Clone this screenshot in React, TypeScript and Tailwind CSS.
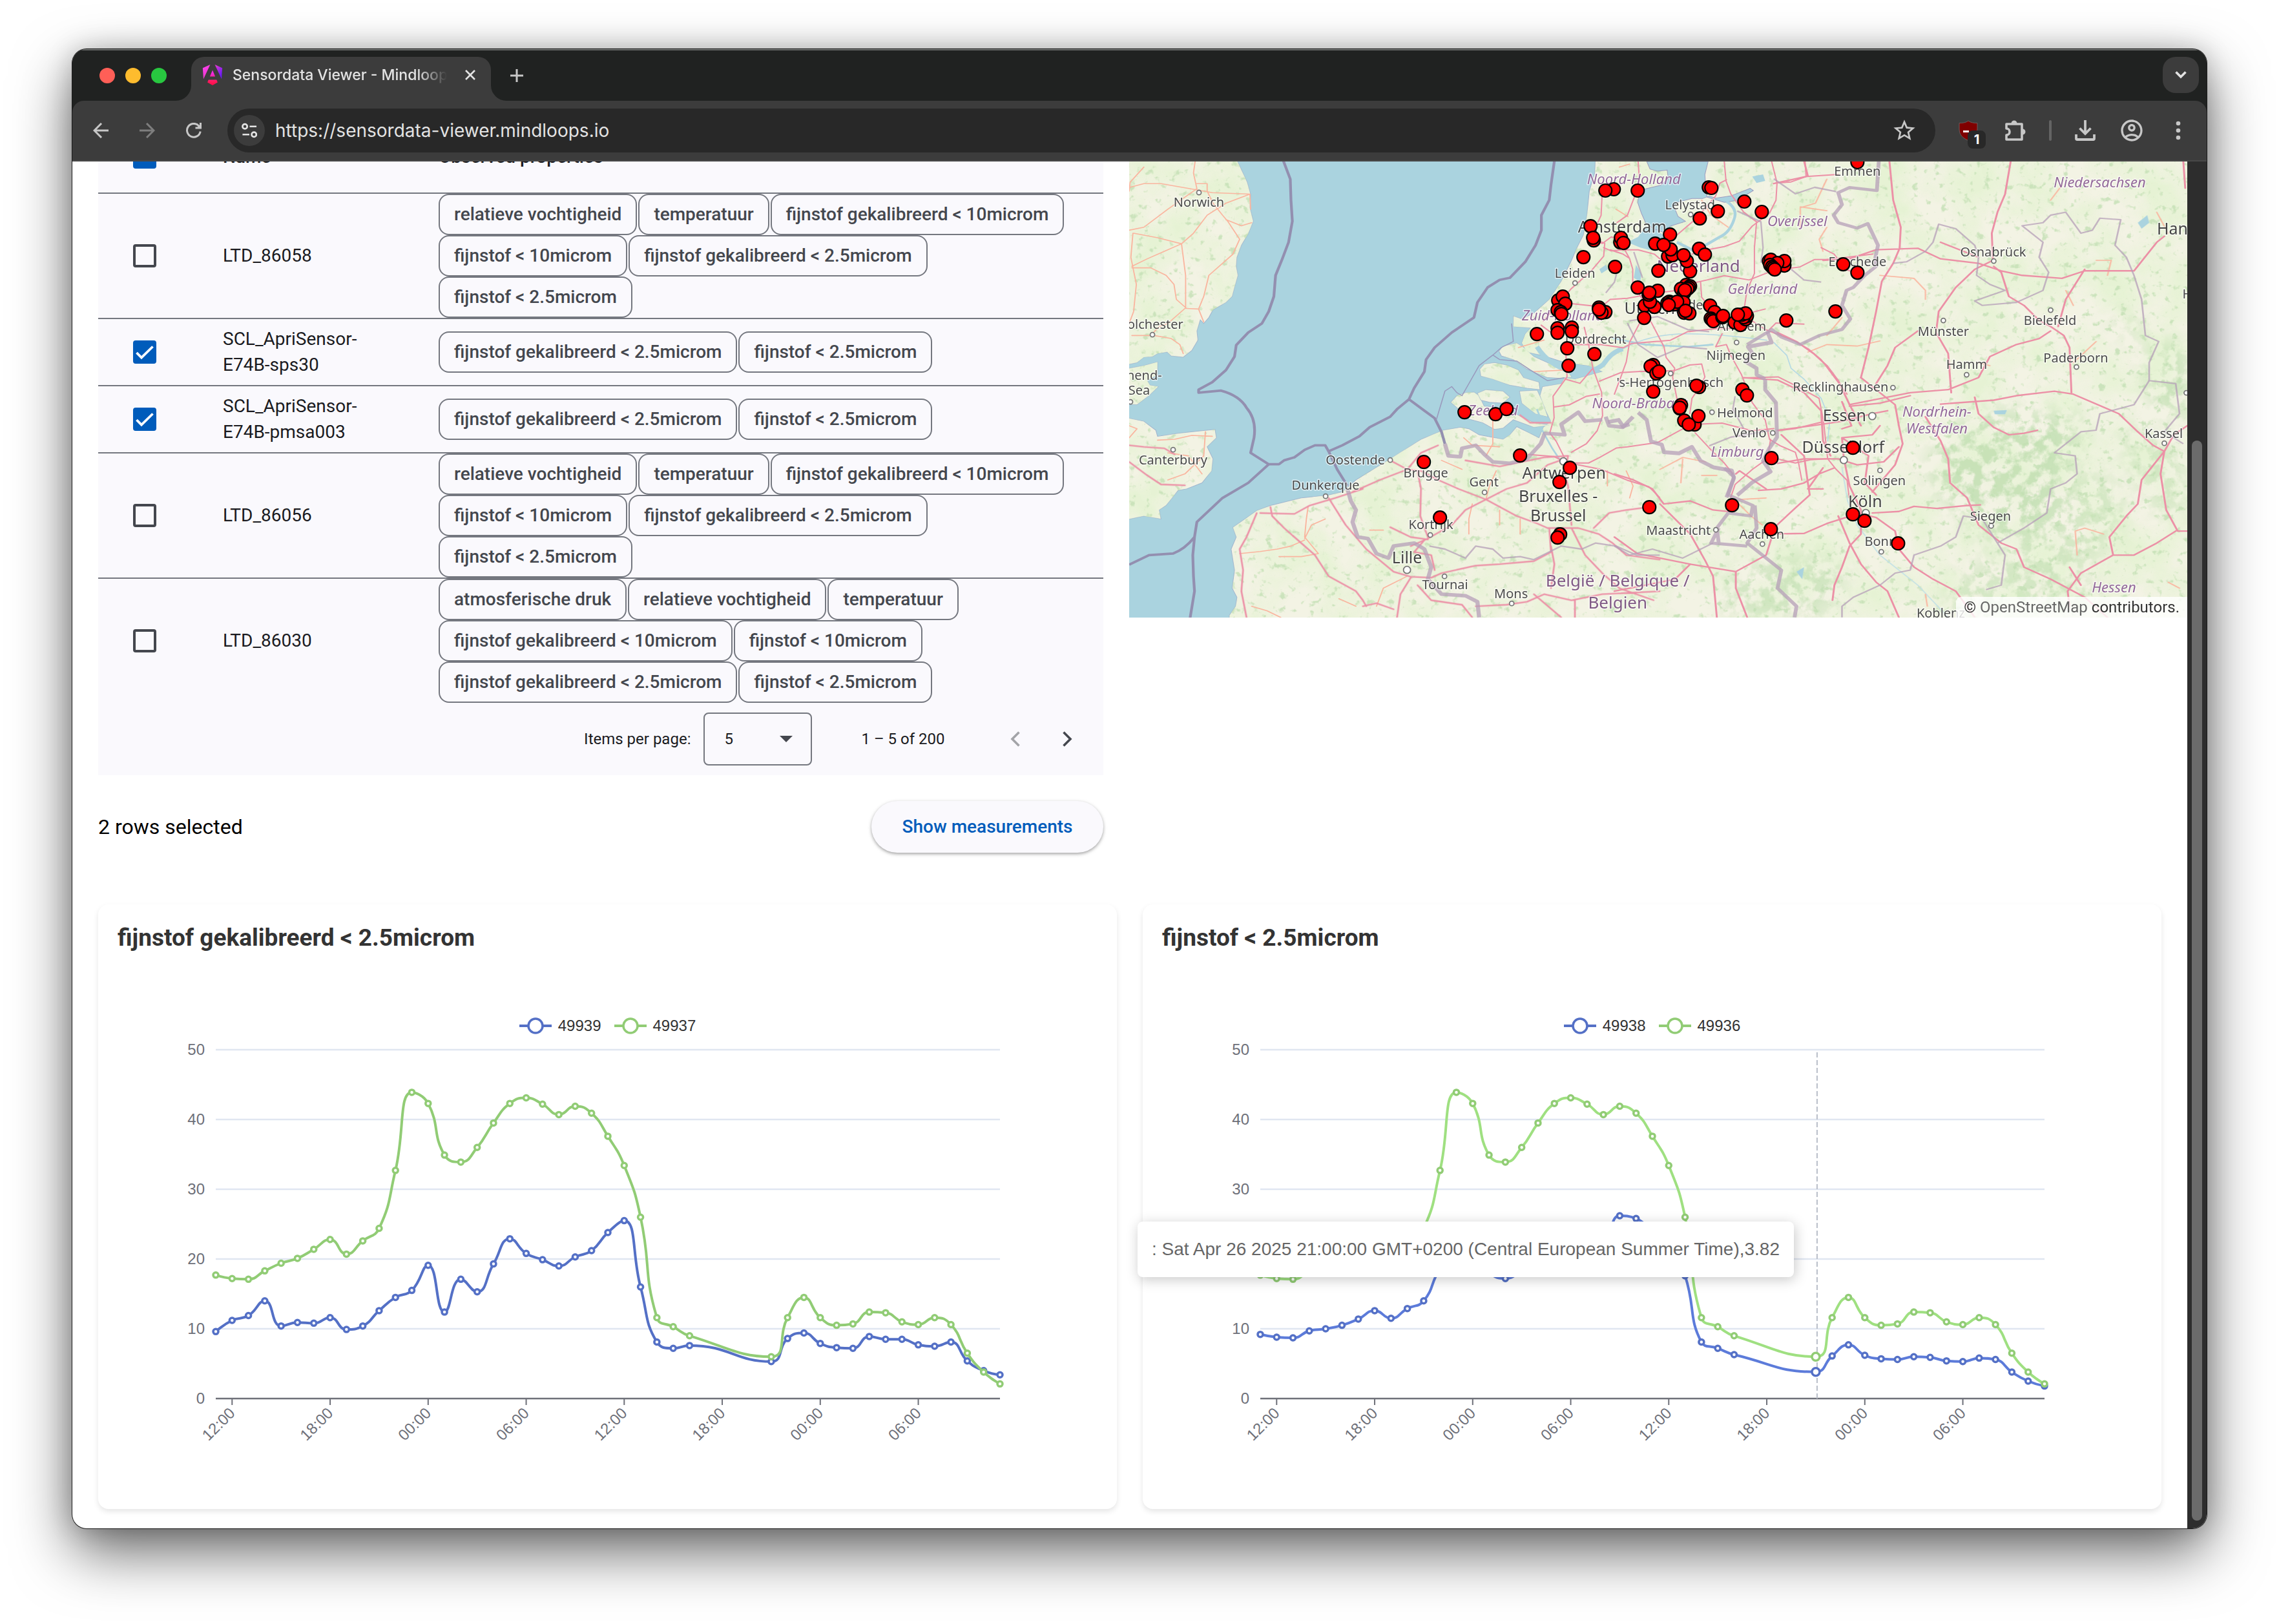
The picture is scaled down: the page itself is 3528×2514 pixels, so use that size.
import React, { useId, useState } from "react";
import { MdOutlineAccountCircle, MdStarBorder } from "react-icons/md";

/* ------------------------------------------------------------------ */
/* Browser chrome                                                      */
/* ------------------------------------------------------------------ */

function AngularLogo() {
  return (
    <svg viewBox="0 0 24 24" className="size-8 shrink-0" aria-hidden="true">
      <defs>
        <linearGradient id="ng-a" x1="0" y1="0" x2="1" y2="0.6">
          <stop offset="0" stopColor="#ff41f8" />
          <stop offset="0.45" stopColor="#f03ad0" />
          <stop offset="1" stopColor="#6e1bf4" />
        </linearGradient>
        <linearGradient id="ng-b" x1="0" y1="0" x2="0" y2="1">
          <stop offset="0.2" stopColor="#f02be0" />
          <stop offset="0.75" stopColor="#ff1a5c" />
          <stop offset="1" stopColor="#ff0a45" />
        </linearGradient>
      </defs>
      <path
        fill="url(#ng-a)"
        d="M14.692 0l7.832 16.855.814-12.856L14.692 0ZM9.308 0 .662 3.999l.814 12.856L9.308 0Z"
      />
      <path
        fill="url(#ng-b)"
        d="M16.712 17.711H7.288l-1.204 2.916L12 24l5.916-3.373-1.204-2.916ZM8.903 13.93h6.198L12 6.396 8.903 13.93Z"
      />
    </svg>
  );
}

function TabFlare({ side }: { side: "left" | "right" }) {
  return (
    <svg
      viewBox="0 0 24 24"
      className={side === "left" ? "absolute bottom-0 -left-6 size-6" : "absolute bottom-0 -right-6 size-6"}
      aria-hidden="true"
    >
      <path d={side === "left" ? "M24 0 V24 H0 A24 24 0 0 0 24 0Z" : "M0 0 V24 H24 A24 24 0 0 1 0 0Z"} fill="#3c3c3c" />
    </svg>
  );
}

function TabStrip() {
  return (
    <div className="flex h-20 items-stretch border-t-2 border-[#6d6f6e] bg-[#202221] pl-[42px] pr-3">
      <div className="flex items-center gap-4" aria-hidden="true">
        <span className="size-6 rounded-full bg-[#ff5f57]" />
        <span className="size-6 rounded-full bg-[#febc2e]" />
        <span className="size-6 rounded-full bg-[#28c840]" />
      </div>
      <div className="relative ml-[38px] mt-2.5 flex w-[464px] items-start rounded-t-[20px] bg-[#3c3c3c] pl-[17px] pr-5">
        <TabFlare side="left" />
        <TabFlare side="right" />
        <div className="flex h-14 w-full items-center">
          <AngularLogo />
          <div className="ml-[15px] h-8 flex-1 overflow-hidden whitespace-nowrap text-[23px] font-medium leading-8 text-[#e3e3e3] [mask-image:linear-gradient(to_right,black_86%,transparent)]">
            Sensordata Viewer - Mindloops
          </div>
          <button type="button" aria-label="Close tab" className="ml-6 p-1">
            <svg viewBox="0 0 16 16" className="size-4" fill="none" stroke="#e3e3e3" strokeWidth="2.6">
              <path d="M1 1 15 15M15 1 1 15" />
            </svg>
          </button>
        </div>
      </div>
      <button type="button" aria-label="New tab" className="ml-[30px] self-center">
        <svg viewBox="0 0 20 20" className="size-5" fill="none" stroke="#c7c7c7" strokeWidth="3">
          <path d="M10 0V20M0 10H20" />
        </svg>
      </button>
      <button
        type="button"
        aria-label="Search tabs"
        className="ml-auto mt-2.5 flex size-14 items-center justify-center rounded-[20px] bg-[#3c3c3c]"
      >
        <svg viewBox="0 0 18 12" className="h-3 w-[18px]" fill="none" stroke="#e3e3e3" strokeWidth="3.6">
          <path d="M1.5 1.5 9 9 16.5 1.5" />
        </svg>
      </button>
    </div>
  );
}

function Toolbar() {
  return (
    <div className="flex h-[94px] items-center rounded-t-[18px] border-b-2 border-[#484848] bg-[#3c3c3c] pl-8 pr-10">
      <div className="flex items-center gap-12">
        <button type="button" aria-label="Back">
          <svg viewBox="0 0 24 24" className="size-6" fill="none" stroke="#c7c7c7" strokeWidth="3">
            <path d="M24 12H2.5M13 1 2 12 13 23" />
          </svg>
        </button>
        <button type="button" aria-label="Forward">
          <svg viewBox="0 0 24 24" className="size-6" fill="none" stroke="#7e7e7e" strokeWidth="3">
            <path d="M0 12H21.5M11 1 22 12 11 23" />
          </svg>
        </button>
        <button type="button" aria-label="Reload">
          <svg viewBox="0 0 24 24" className="size-6" fill="none" stroke="#c7c7c7" strokeWidth="3">
            <path d="M22.2 13.5A10.4 10.4 0 1 1 20 5.2L22 8" />
            <path d="M14.5 8H22.5V0" />
            <path d="M16 8.5H23V1.500Z" fill="#c7c7c7" stroke="none" />
          </svg>
        </button>
      </div>
      <div className="ml-10 flex h-[68px] flex-1 items-center rounded-full bg-[#282828] pl-2.5 pr-7">
        <button
          type="button"
          aria-label="View site information"
          className="flex size-12 shrink-0 items-center justify-center rounded-full bg-[#3c3c3c]"
        >
          <svg viewBox="0 0 25 25" className="size-6" fill="none" stroke="#e3e3e3" strokeWidth="2.8">
            <circle cx="5.300" cy="6" r="3.800" />
            <path d="M13 6H24M1.500 19H12.500" />
            <circle cx="20" cy="19" r="3.800" />
          </svg>
        </button>
        <input
          type="text"
          aria-label="Address"
          defaultValue="https://sensordata-viewer.mindloops.io"
          className="ml-4 h-10 min-w-0 flex-1 bg-transparent text-[28px] leading-10 text-[#e3e3e3] outline-none"
        />
        <button type="button" aria-label="Bookmark this tab">
          <MdStarBorder className="size-10 text-[#c7c7c7]" />
        </button>
      </div>
      <button type="button" aria-label="uBlock Origin" className="relative ml-9">
        <svg viewBox="0 0 30 32" className="h-8 w-[30px]" aria-hidden="true">
          <path
            d="M15 1C11.500 4 6 4.500 1 4.500V14C1 22.500 6.500 28 15 31.500 23.500 28 29 22.500 29 14V4.500C24 4.500 18.500 4 15 1Z"
            fill="#800000"
            stroke="#6b5b5b"
            strokeWidth="1"
          />
          <path d="M7 17.500H16" stroke="#fff" strokeWidth="3" />
        </svg>
        <span className="absolute -bottom-3 left-3.5 flex size-7 items-center justify-center rounded-lg bg-[#282828] text-[20px] font-bold leading-7 text-white">
          1
        </span>
      </button>
      <button type="button" aria-label="Extensions" className="ml-[38px]">
        <svg viewBox="0 0 38 38" className="size-[38px]" aria-hidden="true">
          <path
            d="M6 9H30V33H6V26C9 26 11 23.800 11 21 11 18.200 9 16 6 16Z"
            fill="none"
            stroke="#c7c7c7"
            strokeWidth="3.600"
            strokeLinejoin="round"
          />
          <path d="M13.500 8A4.500 4.500 0 0 1 22.500 8ZM31 16.500A4.500 4.500 0 0 1 31 25.500Z" fill="#c7c7c7" />
        </svg>
      </button>
      <span className="ml-[34px] h-8 w-1 rounded-full bg-[#646464]" />
      <button type="button" aria-label="Downloads" className="ml-9">
        <svg viewBox="0 0 32 32" className="size-8" fill="none" stroke="#c7c7c7" strokeWidth="3.800">
          <path d="M16 0V20M7.500 12.500 16 21 24.500 12.500" />
          <path d="M2 22V28.500Q2 30 3.500 30H28.500Q30 30 30 28.500V22" />
        </svg>
      </button>
      <button type="button" aria-label="Profile" className="ml-9">
        <MdOutlineAccountCircle className="size-10 text-[#c7c7c7]" />
      </button>
      <button type="button" aria-label="Menu" className="ml-12">
        <svg viewBox="0 0 8 32" className="h-8 w-2" fill="#c7c7c7">
          <circle cx="4" cy="5" r="3.300" />
          <circle cx="4" cy="16" r="3.300" />
          <circle cx="4" cy="27" r="3.300" />
        </svg>
      </button>
    </div>
  );
}

/* ------------------------------------------------------------------ */
/* Sensor table                                                        */
/* ------------------------------------------------------------------ */

type Sensor = { name: string; properties: string[]; selected: boolean };

const CAL25 = "fijnstof gekalibreerd < 2.5microm";
const CAL10 = "fijnstof gekalibreerd < 10microm";
const RAW25 = "fijnstof < 2.5microm";
const RAW10 = "fijnstof < 10microm";

const SENSORS: Sensor[] = [
  { name: "LTD_86058", properties: ["relatieve vochtigheid", "temperatuur", CAL10, RAW10, CAL25, RAW25], selected: false },
  { name: "SCL_ApriSensor-E74B-sps30", properties: [CAL25, RAW25], selected: true },
  { name: "SCL_ApriSensor-E74B-pmsa003", properties: [CAL25, RAW25], selected: true },
  { name: "LTD_86056", properties: ["relatieve vochtigheid", "temperatuur", CAL10, RAW10, CAL25, RAW25], selected: false },
  {
    name: "LTD_86030",
    properties: ["atmosferische druk", "relatieve vochtigheid", "temperatuur", CAL10, RAW10, CAL25, RAW25],
    selected: false,
  },
];

function CheckBox({
  label,
  checked,
  partial = false,
  onChange,
}: {
  label: string;
  checked: boolean;
  partial?: boolean;
  onChange: () => void;
}) {
  return (
    <label className="relative block size-9">
      <input
        type="checkbox"
        aria-label={label}
        checked={checked}
        onChange={onChange}
        className="block size-9 appearance-none rounded border-4 border-[#44474e] checked:border-[#005cbb] checked:bg-[#005cbb]"
      />
      {checked && (
        <svg viewBox="0 0 36 36" className="pointer-events-none absolute inset-0 size-9" fill="none" stroke="#fff" strokeWidth="3.800">
          <path d={partial ? "M7 18H29" : "M5.500 19 13 26.500 30.500 9.500"} />
        </svg>
      )}
    </label>
  );
}

function SensorTable() {
  const [rows, setRows] = useState(SENSORS);
  const toggle = (index: number) =>
    setRows((all) => all.map((row, i) => (i === index ? { ...row, selected: !row.selected } : row)));
  const selected = rows.filter((row) => row.selected).length;
  const toggleAll = () => setRows((all) => all.map((row) => ({ ...row, selected: selected === 0 })));

  return (
    <section className="-mt-[62px]">
      <div className="bg-[#faf9fd]">
        <table className="w-full table-fixed border-separate border-spacing-0 text-[28px] leading-10 text-[#1a1b1f]">
          <colgroup>
            <col className="w-[161px]" />
            <col className="w-[366px]" />
            <col />
          </colgroup>
          <thead>
            <tr className="h-28 text-left">
              <th className="border-b-2 border-[#74777f] pl-[54px]">
                <CheckBox
                  label="Select all"
                  checked={selected > 0}
                  partial={selected < rows.length}
                  onChange={toggleAll}
                />
              </th>
              <th className="border-b-2 border-[#74777f] pl-8 font-medium">Name</th>
              <th className="border-b-2 border-[#74777f] font-medium">Observed properties</th>
            </tr>
          </thead>
          <tbody>
            {rows.map((row, i) => {
              const line = i < rows.length - 1 ? "border-b-2 border-[#74777f] " : "";
              return (
                <tr key={row.name} className="h-[104px]">
                  <td className={line + "pl-[54px]"}>
                    <CheckBox label={"Select " + row.name} checked={row.selected} onChange={() => toggle(i)} />
                  </td>
                  <td className={line + "pl-8 pr-16"}>{row.name}</td>
                  <td className={line + "pr-8"}>
                    <ul className="flex flex-wrap gap-x-0.5">
                      {row.properties.map((property) => (
                        <li
                          key={property}
                          className="flex h-16 items-center whitespace-nowrap rounded-2xl border-2 border-[#74777f] px-[22px] font-medium text-[#44474e]"
                        >
                          {property}
                        </li>
                      ))}
                    </ul>
                  </td>
                </tr>
              );
            })}
          </tbody>
        </table>
        <div className="flex h-28 items-center justify-end pr-12 text-[24px] leading-8 text-[#1a1b1f]">
          <label htmlFor="page-size">Items per page:</label>
          <div className="relative ml-5">
            <select
              id="page-size"
              defaultValue="5"
              className="block h-[82px] w-[168px] appearance-none rounded-lg border-2 border-[#74777f] bg-transparent pl-[30px] text-[24px] leading-8"
            >
              <option>5</option>
              <option>10</option>
              <option>20</option>
            </select>
            <svg viewBox="0 0 20 10" className="pointer-events-none absolute right-[30px] top-9 h-2.5 w-5" fill="#44474e">
              <path d="M0 0H20L10 10Z" />
            </svg>
          </div>
          <span className="ml-[76px]">1 – 5 of 200</span>
          <button type="button" aria-label="Previous page" disabled className="ml-[102px]">
            <svg viewBox="0 0 16 24" className="h-6 w-4" fill="none" stroke="#a3a4a8" strokeWidth="3.600">
              <path d="M13.500 1.500 3 12 13.500 22.500" />
            </svg>
          </button>
          <button type="button" aria-label="Next page" className="ml-16">
            <svg viewBox="0 0 16 24" className="h-6 w-4" fill="none" stroke="#44474e" strokeWidth="3.600">
              <path d="M2.500 1.500 13 12 2.500 22.500" />
            </svg>
          </button>
        </div>
      </div>
      <div className="mt-10 flex items-center justify-between">
        <p className="text-[32px] leading-10 text-black">{selected} rows selected</p>
        <button
          type="button"
          className="h-20 rounded-full bg-[#faf9fd] px-12 text-[28px] font-medium leading-10 text-[#005cbb] shadow-[0_2px_4px_rgba(0,0,0,0.3),0_2px_6px_2px_rgba(0,0,0,0.06)]"
        >
          Show measurements
        </button>
      </div>
    </section>
  );
}

/* ------------------------------------------------------------------ */
/* Map                                                                 */
/* ------------------------------------------------------------------ */

const MARKERS: [number, number][] = [
  [750, 43], [737, 45], [787, 45], [897, 40], [901, 41], [952, 62], [979, 78], [911, 77], [883, 88], [1127, 1],
  [714, 100], [719, 122], [718, 118], [760, 125], [761, 118], [765, 126], [703, 148], [752, 163], [837, 113],
  [834, 147], [841, 145], [838, 136], [814, 127], [827, 129], [882, 135], [891, 144], [868, 170], [863, 154],
  [858, 145], [819, 169], [990, 154], [993, 152], [1014, 161], [1014, 154], [1003, 157], [992, 160], [995, 163],
  [997, 165], [999, 167], [1105, 159], [1127, 172], [1093, 232], [1017, 246], [787, 195], [818, 200], [798, 223],
  [813, 225], [806, 217], [804, 206], [805, 203], [797, 242], [862, 191], [868, 193], [866, 195], [854, 197],
  [864, 197], [859, 203], [860, 199], [833, 219], [836, 217], [838, 219], [844, 221], [858, 218], [848, 217],
  [835, 222], [859, 234], [867, 235], [861, 231], [899, 223], [906, 233], [900, 243], [902, 245], [904, 247],
  [918, 241], [919, 239], [937, 249], [946, 253], [954, 244], [956, 239], [951, 241], [948, 237], [954, 235],
  [942, 237], [664, 215], [671, 209], [675, 220], [663, 230], [668, 233], [669, 236], [737, 233], [731, 234],
  [727, 226], [727, 229], [663, 258], [685, 257], [663, 265], [685, 263], [631, 267], [678, 289], [720, 298],
  [680, 316], [811, 315], [807, 317], [816, 328], [820, 325], [811, 356], [882, 349], [878, 347], [854, 377],
  [852, 382], [852, 381], [949, 353], [956, 362], [859, 401], [875, 407], [881, 394], [866, 407], [994, 459],
  [1120, 443], [682, 474], [666, 496], [519, 388], [567, 391], [584, 383], [605, 455], [456, 465], [481, 551],
  [805, 535], [667, 577], [663, 582], [933, 532], [993, 569], [1120, 546], [1138, 556], [1190, 591],
];

const TOWNS: [string, number, number][] = [
  ["Norwich", 108, 70], ["Colchester", 34, 259], ["Southend-", 2, 338], ["on-Sea", 0, 361], ["Canterbury", 68, 469],
  ["Oostende", 350, 469], ["Brugge", 459, 489], ["Dunkerque", 304, 508], ["Gent", 549, 503], ["Kortrijk", 467, 569],
  ["Tournai", 489, 662], ["Mons", 591, 676], ["Leiden", 690, 180], ["Lelystad", 868, 74], ["Ede", 871, 229],
  ["Emmen", 1127, 22], ["Osnabrück", 1337, 147], ["Enschede", 1127, 162], ["Arnhem", 948, 262], ["Nijmegen", 939, 307],
  ["Dordrecht", 722, 282], ["Münster", 1260, 270], ["Bielefeld", 1425, 253], ["Hamm", 1296, 321],
  ["Paderborn", 1465, 311], ["'s-Hertogenbosch", 837, 349], ["Recklinghausen", 1101, 356], ["Helmond", 953, 396],
  ["Venlo", 960, 427], ["Solingen", 1161, 501], ["Siegen", 1333, 556], ["Kassel", 1601, 428], ["Maastricht", 850, 578],
  ["Aachen", 979, 584], ["Bonn", 1163, 595], ["Koblenz", 1256, 706], ["Höxter", 1662, 212],
];

const CITIES: [string, number, number][] = [
  ["Amsterdam", 763, 110], ["Utrecht", 810, 236], ["Antwerpen", 673, 491], ["Bruxelles -", 664, 527],
  ["Brussel", 664, 557], ["Lille", 430, 622], ["Hannover", 1648, 113], ["Essen", 1107, 402], ["Düsseldorf", 1105, 451],
  ["Köln", 1139, 535],
];

const REGIONS: [string, number, number][] = [
  ["Noord-Holland", 781, 35], ["Overijssel", 1034, 100], ["Gelderland", 980, 205], ["Zuid-Holland", 671, 246],
  ["Niedersachsen", 1502, 40], ["Noord-Brabant", 790, 382], ["Nordrhein-", 1250, 395], ["Westfalen", 1250, 421],
  ["Limburg", 941, 457], ["Hessen", 1524, 667], ["Zeeland", 563, 393],
];

const COUNTRIES: [string, number, number][] = [
  ["Nederland", 881, 171], ["België / Belgique /", 756, 658], ["Belgien", 756, 692],
];

const TOWN_DOTS: [number, number][] = [
  [108, 48], [36, 268], [2, 372], [68, 446], [404, 462], [304, 518], [550, 512], [466, 578], [488, 642], [592, 684],
  [690, 188], [869, 82], [1338, 154], [1260, 246], [1426, 230], [1296, 330], [1466, 318], [838, 328], [1182, 350],
  [902, 388], [996, 420], [1162, 478], [1334, 564], [1602, 436], [908, 570], [980, 592], [1164, 604], [940, 280],
  [1636, 358],
];

const CITY_DOTS: [number, number][] = [[672, 464], [430, 632], [1150, 394], [1106, 462], [1140, 544], [664, 572]];

const WEST = "translate(-9 -10) scale(0.5294 0.4655)";
const EAST = "translate(751 -10) scale(0.5869 0.4655)";
const CENTRE = "translate(631 0) scale(0.3333)";

const LAND = [
  "M0 0H325Q350 60 362 90L372 130 370 175 380 220 365 262 345 300 332 340 330 370 335 400 325 440 318 470 300 490 262 515 250 540 235 560 225 548 215 585 218 615 200 650 175 672 140 668 128 655 100 660 85 670 60 672 40 690 0 700Z",
  "M0 712 60 700 100 688 100 730 70 750 78 765 102 770 75 800 40 830 0 828Z",
  "M0 870 30 878 60 885 95 915 100 935 160 925 215 918 268 912 272 940 245 970 262 1010 258 1050 230 1090 185 1110 160 1115 125 1165 105 1180 110 1210 60 1200 0 1215Z",
  "M1380 0 1378 60 1362 120 1355 200 1345 265 1325 310 1310 350 1280 420 1245 480 1215 510 1200 525 1165 545 1140 535 1140 570 1190 575 1175 595 1165 625 1180 655 1230 668 1290 690 1360 700 1400 720 1320 745 1290 740 1280 760 1225 770 1218 800 1235 850 1250 885 1228 905 1215 940 1180 920 1150 903 1130 930 1110 945 1040 930 1010 910 985 905 935 915 870 945 780 1010 680 1080 640 1120 600 1130 520 1140 430 1165 390 1182 320 1238 330 1270 315 1310 325 1380 318 1440 332 1470 328 1500 310 1530 310 1600H3200V0Z",
  "M1098 652 1110 635 1150 625 1170 640 1200 670 1250 695 1300 720 1310 738 1275 742 1240 740 1180 712 1140 680 1105 668Z",
  "M1042 712 1055 695 1085 690 1120 698 1155 715 1170 740 1215 755 1218 780 1180 775 1130 765 1080 745 1045 735Z",
  "M957 822 975 800 1000 790 1025 788 1040 800 1055 835 1100 838 1130 850 1160 868 1200 890 1245 898 1200 905 1140 880 1110 908 1085 912 1050 890 1010 878 985 850Z",
  "M1035 792 1060 780 1110 785 1130 805 1110 825 1070 822 1045 815Z",
  "M1158 785 1210 782 1225 820 1240 870 1205 860 1165 825Z",
];

function MapLabels({
  items,
  className,
  size,
}: {
  items: [string, number, number][];
  className: string;
  size: number;
}) {
  return (
    <g
      className={className}
      fontSize={size}
      textAnchor="middle"
      stroke="#ffffff"
      strokeOpacity="0.6"
      strokeWidth="3"
      strokeLinejoin="round"
      paintOrder="stroke"
      fontFamily="'Noto Sans', sans-serif"
    >
      {items.map(([text, x, y]) => (
        <text key={text} x={x} y={y}>
          {text}
        </text>
      ))}
    </g>
  );
}

function SensorMap() {
  return (
    <section className="relative self-start overflow-hidden bg-[#aad3df]">
      <svg viewBox="0 0 1637 706" className="block h-auto w-full" role="img" aria-label="Map of sensor locations">
        <defs>
          <filter id="meadow" filterUnits="userSpaceOnUse" x="0" y="0" width="1637" height="706" colorInterpolationFilters="sRGB">
            <feTurbulence type="fractalNoise" baseFrequency="0.014" numOctaves="4" seed="7" />
            <feColorMatrix values="0 0 0 0 0.9  0 0 0 0 0.95  0 0 0 0 0.83  2.4 0 0 0 -0.8" />
            <feComposite in2="SourceGraphic" operator="in" />
          </filter>
          <filter id="copse" filterUnits="userSpaceOnUse" x="0" y="0" width="1637" height="706" colorInterpolationFilters="sRGB">
            <feTurbulence type="fractalNoise" baseFrequency="0.09" numOctaves="3" seed="3" />
            <feColorMatrix values="0 0 0 0 0.77  0 0 0 0 0.88  0 0 0 0 0.71  0 6 0 0 -3.7" />
            <feComposite in2="SourceGraphic" operator="in" />
          </filter>
          <filter id="forest" filterUnits="userSpaceOnUse" x="0" y="0" width="1637" height="706" colorInterpolationFilters="sRGB">
            <feGaussianBlur in="SourceGraphic" stdDeviation="16" result="soft" />
            <feTurbulence type="fractalNoise" baseFrequency="0.05" numOctaves="4" seed="11" />
            <feColorMatrix values="0 0 0 0 0.76  0 0 0 0 0.875  0 0 0 0 0.7  0 5 0 0 -2.1" />
            <feComposite in2="soft" operator="in" />
          </filter>
          <g id="land-shape" transform={WEST}>
            {LAND.map((d) => (
              <path key={d} d={d} />
            ))}
          </g>
        </defs>

        <use href="#land-shape" fill="#f3f3e4" stroke="#9fb4cf" strokeWidth="2" />
        <g filter="url(#meadow)">
          <use href="#land-shape" fill="#000" />
        </g>
        <g filter="url(#copse)" opacity="0.8">
          <use href="#land-shape" fill="#000" />
        </g>
        <g filter="url(#forest)" opacity="0.85">
          <g transform={EAST}>
            <path d="M900 900 1000 850 1150 860 1250 880 1210 960 1200 1080 1150 1200 1040 1290 960 1260 900 1180 850 1120 820 1020Z" />
            <path d="M1410 630 1510 640 1510 870 1440 860 1400 740Z" />
            <path d="M1150 1130 1280 1050 1350 1150 1300 1300 1200 1420 1080 1380 1040 1300Z" opacity="0.7" />
            <path d="M880 1420 1000 1330 1200 1380 1300 1480 1400 1540H880Z" opacity="0.7" />
            <path d="M290 1400 420 1340 600 1340 600 1450 540 1540H300Z" opacity="0.8" />
            <path d="M1320 520 1400 570 1390 610 1310 590Z" opacity="0.7" />
            <path d="M1340 880 1500 1000 1500 1200 1420 1180 1350 1000Z" opacity="0.7" />
          </g>
          <g transform={CENTRE}>
            <path d="M760 470 950 440 980 640 860 690 760 600Z" opacity="0.6" />
          </g>
        </g>

        {/* lakes and rivers */}
        <g transform={CENTRE} fill="#aad3df">
          <path
            d="M510 0 525 35 560 45 605 40 610 80 575 110 500 128 475 150 468 190 485 240 505 285 540 312 590 330 620 300 690 278 655 255 635 205 650 190 720 172 770 172 800 160 830 170 900 160 990 125 1005 135 930 180 870 190 790 165 785 130 780 60 795 0Z"
            stroke="#9c9cc0"
            strokeWidth="3"
          />
          <path d="M420 375 470 350 505 300 560 320 590 345 620 350 600 390 570 410 520 410 480 400Z" />
          <path d="M880 185Q935 220 915 270 895 330 850 350L780 390 730 415 650 375" fill="none" stroke="#aad3df" strokeWidth="13" />
          <path d="M0 860Q60 950 160 975 260 985 310 940 350 880 400 870" fill="none" stroke="#aad3df" strokeWidth="22" />
          <path
            d="M400 870Q520 800 700 800 850 800 1070 830M1100 840 1160 900 1180 960 1240 1010 1320 1100 1360 1200 1350 1300"
            fill="none"
            stroke="#b5d9e4"
            strokeWidth="5"
          />
          <path d="M350 820 500 850 700 860 820 850M0 1150 20 1200M20 1240 70 1330 110 1390" fill="none" stroke="#aad3df" strokeWidth="8" />
          <path d="M460 480 485 520 480 560 450 540ZM290 500 320 480 330 500 300 520ZM1000 70 1050 60 1060 90 1020 100Z" />
        </g>
        <g transform={EAST} fill="#aad3df">
          <path d="M1380 225 1405 200 1410 225 1390 245ZM1000 850 1035 848 1030 862 1003 862ZM480 1385 500 1370 495 1410Z" />
          <path d="M600 1040 615 1150 640 1230 700 1330 800 1430 880 1537" fill="none" stroke="#bfdfe6" strokeWidth="3" />
        </g>

        {/* secondary roads */}
        <g fill="none" stroke="#fab59f" strokeWidth="3.500" strokeLinejoin="round" strokeLinecap="round">
          <g transform={WEST}>
            <path d="M17 250 60 240 130 180 215 112 205 60 210 20M17 108 60 95 110 95 210 115 260 125 370 130 372 180M30 260 100 275 170 295 205 260 245 200 300 160 370 130M25 370 70 345 120 320 170 295 182 400 182 510M25 375 80 375 125 400 148 430 155 480 185 510 220 512 235 555M215 95H245V120L262 160 290 200 305 220 340 280 320 330 250 400 235 470 220 512M300 215 345 235 375 225M28 260 22 340 38 430 30 520 17 560" />
            <path d="M25 600 80 600 105 570 130 560 180 510M90 600 140 610 165 630 175 660M240 920 235 1000 180 1060 130 1080M100 948 150 945 200 932 260 935M17 900 40 910 17 940M130 990 190 1000 230 1060M60 40 20 90 17 120" />
            <path d="M540 1170 535 1210 530 1270 570 1325M340 1325 400 1318 450 1310 490 1300 530 1280M530 1275 550 1230 590 1210M455 1335H520L570 1325M375 1500 420 1515 460 1537M630 1475 680 1500M740 1500 760 1440 830 1400" />
            <path d="M1080 870V960L1060 1000M995 940 1020 965 1100 970M1090 1050 1070 1100 1060 1145M1020 1160 1010 1210V1260M930 1015 990 1045M1100 1180V1230M1160 1210V1260M720 1247H760M1200 720 1290 715M1155 640 1230 615M1415 1050V1100M1470 1050 1490 1100 1480 1140M1450 40 1480 30M1440 180 1475 205" />
          </g>
          <g transform={EAST}>
            <path d="M560 80 530 160 490 175V240M490 172 560 185M560 240 540 280 550 320M230 150 255 200 300 240M700 400 790 410 820 450V480M510 655 560 630 640 635 700 618M1150 150 1180 100M1430 190 1460 260M1190 450 1210 500M1210 690 1270 620M1220 1330 1215 1250 1240 1240 1290 1260M230 1065H270M240 1020 180 1005 120 1045M180 1010 175 1090M320 1150 360 1200 390 1230M330 1145 400 1140M1270 350H1310L1300 400M960 690 990 700M820 1460 825 1500M1460 1420 1490 1440M600 540 560 600" />
          </g>
        </g>

        {/* motorways */}
        <g fill="none" stroke="#ec90a6" strokeLinejoin="round" strokeLinecap="round">
          <g transform={WEST} strokeWidth="5">
            <path d="M780 1015 830 1045 870 1050 920 1080 980 1110 1060 1145 1150 1200 1210 1225 1240 1240 1330 1240 1390 1260 1430 1290 1470 1330 1568 1345M670 1120 750 1080 830 1045 870 990 920 965M860 1050 870 1110 868 1200 890 1270M840 1300 890 1275 960 1230 1000 1180 1060 1145 1120 1110 1180 1090 1240 1030 1290 1010M1000 1015 1100 1035 1230 1005 1300 1000M400 1190 500 1193 545 1165 620 1140 700 1110M430 1170 435 1200 470 1240 560 1330 600 1400 680 1450 700 1480 710 1500" />
            <path d="M390 1190 360 1270 340 1310 350 1380 345 1450 360 1537M600 1140 650 1230 710 1310 790 1385 840 1402 900 1405 930 1390 1030 1365 1100 1360 1200 1350 1250 1320 1245 1240M880 1280 850 1320 900 1330 910 1380M840 1405 810 1460 800 1537M700 1500 740 1490 790 1510M860 1430 900 1480 990 1495 1020 1537M1030 1500 1120 1495 1180 1485 1230 1460 1310 1480 1400 1460 1568 1450M1310 1240 1350 1330 1400 1390 1450 1440 1550 1480M1300 1000 1290 1060 1300 1100 1310 1230M780 1237 840 1270 890 1278M1375 1240 1420 1190 1470 1180 1540 1170M1160 865 1190 890 1250 890M1250 1300 1260 1360 1250 1440M17 1020 70 1065 110 1095 180 1098M17 965 60 970 120 975 150 995M1200 1460 1280 1537M1320 1480V1537" />
          </g>
          <g transform={CENTRE} strokeWidth="6">
            <path d="M470 0 475 70 470 120 420 250 370 285M303 150 298 250 275 300M310 400 345 415 400 410 470 410 545 430 580 460M260 370 305 380 345 350 380 360 430 450 445 500 445 570 490 640 520 740M30 740 100 660 160 590 250 510 310 440 315 380 290 370M340 410 400 430 430 450M20 760 60 790 160 790M160 660 300 675 340 640 420 635 560 610 640 600 700 570 790 550 870 530 985 550 1100 505 1220 490 1290 455 1340 455 1400 450 1560 430" />
            <path d="M870 0 878 90 900 150 960 235 1020 280 1010 400 1010 520 975 600 960 700 1000 700 1060 685M1090 0 1115 100 1110 180 1080 240 1000 300 940 370 870 395 790 410 720 430M1110 100 1180 95 1250 70 1400 60M1250 70 1245 0M640 350 740 265 830 160 850 100 880 85M760 560 765 630 820 700 900 740 1000 740 1060 780 1190 830 1260 870 1320 920 1380 1000 1440 1080M480 745 430 840 415 930 390 1000 360 1080M530 745 590 860 600 910 640 960 630 1000 650 1100 665 1180 680 1240M130 850 300 850 400 865 440 845 620 830 700 790 840 775 950 775" />
            <path d="M220 770 240 850 260 960 300 1070 305 1180 280 1250 230 1310 160 1350M290 1020 390 980 480 975 560 975 640 970 710 945 765 940 780 1000 760 1040 720 1100 710 1170M860 800 830 860 880 850 900 900 950 990 1000 1120 1060 1200 1080 1290 1130 1320 1200 1350 1215 1400 1230 1480M960 1005 1120 1000 1200 1040 1310 1100 1330 1200 1350 1380 1390 1430 1440 1480 1450 1560M1120 1250 1200 1240 1320 1210M740 1220 860 1215 960 1240 1000 1250 1100 1240M150 1400 240 1400 290 1375 370 1330 420 1325 560 1305 680 1240" />
            <path d="M150 1400 300 1430 420 1480 520 1510 570 1560M735 1260 800 1330 870 1400 910 1450M-40 1360 80 1370 140 1400 90 1300 60 1260 80 1190 75 1090 140 1000 135 900M80 1140 150 1130 230 1090 290 1080M200 1030 130 1010M260 960 200 1030M1085 1290 1070 1380 1000 1430 920 1500 900 1560M1070 1370 1200 1400 1270 1385 1360 1380M1080 780 1110 750 1240 755M1320 400 1380 430 1430 500 1490 520" />
          </g>
          <g transform={EAST} strokeWidth="5">
            <path d="M725 20 735 150 755 240 752 310 735 360 705 420 690 520 670 640 650 740M550 350 620 345 690 315 800 310 860 345 960 360 1020 385 1075 400 1180 410 1240 385 1370 385 1430 290 1450 270M1045 20 1030 130 1010 190 995 260 998 350 950 380 900 440 855 520 848 590 880 660 888 790M1000 370 1020 390 1040 470 1080 500 1120 550 1150 570 1185 600 1200 640 1205 790M1170 570 1190 480 1220 420 1240 380M1150 585 1120 610 1060 630 990 670 960 740 880 780 780 790 700 810 620 830M800 585 740 640 720 700 690 760" />
            <path d="M620 835 700 825 780 800M600 820 625 900 600 910M430 590 480 620 525 660 560 700 590 750 620 830 650 900M650 740 690 780 740 830 750 900 760 960 740 1030 680 1120M860 828 1000 815 1060 800 1160 785 1210 795 1330 860 1380 920 1420 965 1450 985 1475 930 1510 900M1450 985 1440 1060 1455 1180 1485 1250 1510 1250M1450 985 1390 1080 1380 1160 1350 1200 1305 1270 1315 1330 1230 1390 1195 1450 1200 1500M1480 1250 1430 1290 1370 1330 1315 1330M950 805 960 860 1000 905 1040 930 1080 925 1115 915" />
            <path d="M430 915 520 900 600 885 680 860 720 850M600 940 680 930 700 900M820 870 860 950 880 1010 885 1090 930 1140 960 1230 1020 1290 1060 1310 1080 1370 1150 1410 1240 1470 1300 1537M680 1190 750 1185 790 1168 850 1175 930 1165 965 1163M430 1025 500 1010 590 1010 640 1030 710 1020 750 970M600 940 605 1010 620 1100 650 1180 650 1260 620 1300 600 1370 580 1430 575 1480M640 1190 690 1205 740 1250 750 1310 790 1370 840 1410 900 1450 950 1537M590 1200 620 1290 650 1360 690 1420 720 1450 750 1537M600 940 670 1000 660 1090 690 1130" />
            <path d="M400 1260 500 1258 560 1225 610 1205M420 1240 480 1170 515 1130 510 1090 500 1000 440 930M550 1040 510 1110 550 1110M0 1060 50 1080 100 1110 130 1160 200 1150 260 1180 300 1185M400 1110 330 1050 320 1060M380 1115 440 1110 500 1090 540 1060 580 1040M120 1160 160 1210 200 1260 240 1350 260 1400 270 1537M0 1270 60 1325 200 1360 320 1385 400 1330 420 1250M200 1360 160 1410 40 1440 0 1450M320 1385 320 1440 350 1537M340 740 430 748 500 790 545 850 550 950 570 1000M500 20 510 70 420 95M1500 20 1505 110M960 340 860 290M1200 1370 1230 1430" />
          </g>
        </g>

        {/* administrative borders */}
        <g fill="none" stroke="#938fb0" strokeWidth="8" strokeLinejoin="round" transform={WEST}>
          <path d="M468 20 488 80 490 150 494 220 483 290 463 350 445 400 440 470 425 520 405 560 365 590 330 632 325 670 300 715 260 755 220 780V790L285 783Q340 800 360 840 390 880 382 940L372 990 425 1028H455L470 1015 500 1005 530 980 560 965H590L600 985" />
          <path d="M600 985 640 965 690 935 720 905 780 870 800 845 835 812 850 775 880 720 885 680 910 640 960 590 1025 540 1035 490 1065 440 1100 415 1130 408 1175 355 1205 300 1222 250V200L1245 150 1250 100 1260 20M835 812 880 850 910 875 930 920 940 960M600 985 625 1045 655 1100" />
          <path d="M425 1028 365 1090 290 1140 215 1220 208 1270 203 1330 205 1400 208 1450 195 1540M208 1270Q180 1310 145 1325L75 1330 17 1362" />
        </g>
        <g fill="none" stroke="#9a9abd" strokeWidth="3" transform={WEST}>
          <path d="M1135 560 1140 620 1105 640 1080 665 1040 700 990 800 975 790 960 770 940 785 915 880M1080 665 1100 680 1150 685 1190 715 1240 750 1290 740" />
        </g>
        <g fill="none" stroke="#b59fb8" strokeOpacity="0.75" strokeLinejoin="round">
          <g transform={WEST} strokeWidth="12">
            <path d="M940 960 950 1000 985 1003 990 975 1030 965 1055 995 1080 1020 1130 1025 1180 1010 1220 960 1232 925 1290 930 1280 895 1330 855 1350 885 1400 880M1410 870 1420 900 1460 905 1490 870M655 1110 665 1150 680 1180 670 1220 685 1270 715 1275 740 1325 775 1340 790 1300 850 1290 880 1310 900 1370 890 1410 930 1460 1000 1465 1035 1485 1040 1537" />
            <path d="M895 1300 940 1310 1000 1340 1030 1300 1080 1310 1110 1340 1160 1335 1200 1345 1280 1300 1340 1310 1380 1290 1440 1300 1500 1330 1568 1330" strokeWidth="5" />
          </g>
          <g transform={CENTRE} strokeWidth="18">
            <path d="M470 1165 510 1200 530 1300 580 1315 590 1350 660 1355 720 1325 760 1390 820 1420 905 1435 915 1470 880 1560M330 1210 380 1200 400 1230 430 1220M1060 1010V1060L1110 1120 1115 1280 1080 1330 1050 1390 1085 1440 1000 1490 930 1550M1070 790 1090 840 980 860 1000 890 970 930 1020 960V990L1060 1010" />
            <path d="M800 790 700 780 560 720 430 740M380 480 360 560 320 610M420 750 470 850 560 910 680 860 790 870M930 230 1040 280 1050 400 1040 470M1180 500 1240 550 1320 560M1100 80 1200 150 1290 120 1390 140M450 420 490 540M920 1090 910 1150 960 1240M800 1320 900 1280 1080 1250" strokeWidth="7" />
          </g>
          <g transform={EAST} strokeWidth="10">
            <path d="M697 20 692 118 620 108 590 125 600 165 578 200 590 225 640 243 668 228 695 300 688 340 690 370 660 400 630 440 612 450 600 500 622 545 600 580 540 600 490 630 440 605 415 580 350 630M290 1040 315 1070 300 1130 365 1165 360 1200 300 1190 270 1240 275 1290M370 1165 375 1240 350 1290 400 1340 440 1380 430 1440 480 1500 475 1537M275 1240 255 1290 350 1300" />
            <path d="M735 360 770 355 820 320 840 290 855 230 900 245 950 300 960 340 955 400 990 430 1030 450 950 485 970 500 1060 490 1130 450 1145 390 1120 340 1130 290 1075 235 1130 225 1150 200 1190 190 1230 260 1260 250 1280 210 1335 215 1320 300 1350 340 1370 400 1390 480 1400 600 1435 620 1410 690V750L1480 760 1490 860 1450 920 1500 960" strokeWidth="4.500" />
            <path d="M1410 750 1370 830 1280 860 1270 915 1230 920 1160 990 1215 1000 1220 1060 1190 1090 1150 1110 1140 1190 1080 1240 1010 1290 970 1210 920 1200 900 1270 860 1300 790 1330 780 1380 740 1390 700 1430 630 1470 600 1500V1537M1010 1290 1030 1330 1020 1430 980 1445M0 1300 40 1330 100 1310 180 1340 260 1290" strokeWidth="4.500" />
          </g>
        </g>

        <g fill="#ffffff" stroke="#777777" strokeWidth="1.800">
          {TOWN_DOTS.map(([x, y]) => (
            <circle key={x + "-" + y} cx={x} cy={y} r="3.500" />
          ))}
          {CITY_DOTS.map(([x, y]) => (
            <circle key={x + "-" + y} cx={x} cy={y} r="5.500" />
          ))}
        </g>

        <MapLabels items={TOWNS} className="fill-[#4a4a4a]" size={20} />
        <MapLabels items={CITIES} className="fill-[#444444]" size={25} />
        <MapLabels items={REGIONS} className="fill-[#93699a] italic" size={22} />
        <MapLabels items={COUNTRIES} className="fill-[#805a85]" size={26} />

        <g fill="#ff0000" stroke="#000000" strokeWidth="2.200">
          {MARKERS.map(([x, y], i) => (
            <circle key={i} cx={x} cy={y} r="10" />
          ))}
        </g>
      </svg>
      <p className="absolute bottom-0 right-0 rounded-tl-lg bg-white/80 px-3 text-[24px] leading-8 text-[#333]">
        ©{" "}
        <a href="https://www.openstreetmap.org/copyright" className="text-[#666]">
          OpenStreetMap
        </a>{" "}
        contributors.
      </p>
    </section>
  );
}

/* ------------------------------------------------------------------ */
/* Charts                                                              */
/* ------------------------------------------------------------------ */

const HOURS = [
  ...Array.from({ length: 30 }, (_, i) => i),
  ...Array.from({ length: 15 }, (_, i) => i + 34),
];

const SERIES_49939 = [
  9.6, 11.2, 11.9, 14, 10.4, 10.9, 10.8, 11.6, 9.9, 10.4, 12.6, 14.5, 15.5, 19.1, 12.4, 17.1, 15.3, 19.3, 22.9, 20.8,
  19.9, 19, 20.3, 21.2, 23.8, 25.5, 16, 8.1, 7.2, 7.6, 5.3, 8.6, 9.4, 7.9, 7.3, 7.2, 8.9, 8.5, 8.5, 7.7, 7.5, 8.1, 5.4,
  4, 3.4,
];
const SERIES_49937 = [
  17.7, 17.2, 17.1, 18.3, 19.4, 20.1, 21.4, 22.8, 20.7, 22.6, 24.4, 32.7, 43.9, 42.3, 34.9, 33.9, 36, 39.5, 42.3, 43.1,
  42.2, 40.7, 41.9, 40.9, 37.6, 33.4, 26, 11.6, 10.3, 9, 6, 11.6, 14.5, 11.6, 10.5, 10.7, 12.4, 12.3, 11, 10.6, 11.6,
  10.6, 6.5, 3.8, 2.1,
];
const SERIES_49938 = [
  9.2, 8.8, 8.7, 9.7, 10, 10.5, 11.4, 12.6, 11.5, 12.9, 14, 18.6, 21, 20.4, 18, 17.2, 18.3, 19.5, 20.6, 21.4, 21, 21.6,
  26.2, 25.8, 24, 22.5, 17.6, 8.1, 7.2, 6.3, 3.82, 6.1, 7.7, 6.2, 5.7, 5.6, 6, 5.9, 5.4, 5.3, 5.8, 5.6, 3.8, 2.5, 1.8,
];

const PLOT = { left: 182, right: 1396, top: 21, bottom: 561 };
const px = (hour: number) => PLOT.left + (hour / 48) * (PLOT.right - PLOT.left);
const py = (value: number) => PLOT.bottom - (value / 50) * (PLOT.bottom - PLOT.top);

const between = (v: number, a: number, b: number) => Math.min(Math.max(v, Math.min(a, b)), Math.max(a, b));

/* Cubic spline whose control points never overshoot their neighbours. */
function smoothPath(points: [number, number][]) {
  let d = `M${points[0][0]} ${points[0][1]}`;
  let c0 = points[0];
  for (let i = 1; i < points.length; i++) {
    const [x, y] = points[i];
    const [qx, qy] = points[i - 1];
    let c1: [number, number] = [x, y];
    let next: [number, number] = [x, y];
    if (i < points.length - 1) {
      const [nx, ny] = points[i + 1];
      const before = Math.hypot(x - qx, y - qy);
      const after = Math.hypot(nx - x, ny - y);
      const ratio = after / (after + before);
      next = [between(x + (nx - qx) * 0.5 * ratio, nx, x), between(y + (ny - qy) * 0.5 * ratio, ny, y)];
      c1 = [
        between(x - ((next[0] - x) * before) / after, qx, x),
        between(y - ((next[1] - y) * before) / after, qy, y),
      ];
      next = [x + ((x - c1[0]) * after) / before, y + ((y - c1[1]) * after) / before];
    }
    d += `C${c0[0].toFixed(1)} ${c0[1].toFixed(1)} ${c1[0].toFixed(1)} ${c1[1].toFixed(1)} ${x.toFixed(1)} ${y.toFixed(1)}`;
    c0 = next;
  }
  return d;
}

type Series = { id: string; values: number[]; color: string; line: string };

const TICKS: [number, string][] = [
  [1, "12:00"], [7, "18:00"], [13, "00:00"], [19, "06:00"], [25, "12:00"], [31, "18:00"], [37, "00:00"], [43, "06:00"],
];

function ChartCard({
  title,
  series,
  focusHour,
  children,
}: {
  title: string;
  series: Series[];
  focusHour?: number;
  children?: React.ReactNode;
}) {
  const headingId = useId();
  return (
    <article
      aria-labelledby={headingId}
      className="relative rounded-2xl bg-white pt-7 shadow-[0_4px_8px_rgba(0,0,0,0.1)]"
    >
      <h2 id={headingId} className="pl-[30px] text-[37px] font-bold leading-[48px] text-[#333]">
        {title}
      </h2>
      <ul className="mt-24 flex h-8 items-center justify-center gap-5 font-['Liberation_Sans',Arial,sans-serif] text-[24px] leading-8 text-[#333]">
        {series.map((s) => (
          <li key={s.id} className="flex items-center gap-2.5">
            <svg viewBox="0 0 50 28" className="h-7 w-[50px]" fill="#fff" stroke={s.color} strokeWidth="4">
              <path d="M0 14H50" />
              <circle cx="25" cy="14" r="11" strokeWidth="3.500" />
            </svg>
            {s.id}
          </li>
        ))}
      </ul>
      <svg
        viewBox="0 0 1577 732"
        className="block h-auto w-full font-['Liberation_Sans',Arial,sans-serif]"
        role="img"
        aria-label={title + " over time"}
      >
        {[10, 20, 30, 40, 50].map((v) => (
          <path key={v} d={`M${PLOT.left} ${py(v)}H${PLOT.right}`} stroke="#e0e6f1" strokeWidth="2.500" />
        ))}
        <g fill="#6e7079" fontSize="24">
          {[0, 10, 20, 30, 40, 50].map((v) => (
            <text key={v} x={PLOT.left - 17} y={py(v) + 8} textAnchor="end">
              {v}
            </text>
          ))}
          {TICKS.map(([hour, label]) => (
            <text
              key={hour}
              x={px(hour) + 6}
              y={PLOT.bottom + 24}
              textAnchor="end"
              transform={`rotate(-45 ${px(hour) + 6} ${PLOT.bottom + 24})`}
            >
              {label}
            </text>
          ))}
        </g>
        <path d={`M${PLOT.left} ${PLOT.bottom}H${PLOT.right}`} stroke="#6e7079" strokeWidth="2.500" />
        {TICKS.map(([hour]) => (
          <path key={hour} d={`M${px(hour)} ${PLOT.bottom}v10`} stroke="#6e7079" strokeWidth="2" />
        ))}
        {focusHour !== undefined && (
          <path
            d={`M${px(focusHour) + 2} ${PLOT.top + 4}V${PLOT.bottom}`}
            stroke="#b9bec9"
            strokeWidth="2"
            strokeDasharray="8 4"
          />
        )}
        {series.map((s) => {
          const points = s.values.map((v, i) => [px(HOURS[i]), py(v)] as [number, number]);
          return (
            <g key={s.id}>
              <path d={smoothPath(points)} fill="none" stroke={s.line} strokeWidth="4" strokeLinejoin="bevel" />
              {points.map(([x, y], i) => (
                <circle
                  key={i}
                  cx={x}
                  cy={y}
                  r={HOURS[i] === focusHour ? 6 : 4}
                  fill="#fff"
                  stroke={s.color}
                  strokeWidth="3.500"
                />
              ))}
            </g>
          );
        })}
      </svg>
      {children}
    </article>
  );
}

/* ------------------------------------------------------------------ */
/* Page                                                                */
/* ------------------------------------------------------------------ */

export default function App() {
  return (
    <div className="h-screen bg-white px-28 pb-[148px] pt-[76px] font-[Roboto,sans-serif]">
      <div className="flex h-full flex-col overflow-hidden rounded-[22px] bg-white shadow-[0_0_0_1px_rgba(0,0,0,0.85),0_36px_90px_rgba(0,0,0,0.6),0_0_40px_rgba(0,0,0,0.2)]">
        <header className="shrink-0 bg-[#202221] font-[Inter,sans-serif]">
          <TabStrip />
          <Toolbar />
        </header>
        <div className="flex min-h-0 flex-1">
          <main className="min-w-0 flex-1 overflow-hidden">
            <div className="grid grid-cols-[1556fr_1637fr] gap-x-10 pl-10">
              <SensorTable />
              <SensorMap />
            </div>
            <div className="mt-20 grid grid-cols-2 gap-x-10 px-10">
              <ChartCard
                title="fijnstof gekalibreerd < 2.5microm"
                series={[
                  { id: "49939", values: SERIES_49939, color: "#5470c6", line: "#5470c6" },
                  { id: "49937", values: SERIES_49937, color: "#91cc75", line: "#91cc75" },
                ]}
              />
              <ChartCard
                title="fijnstof < 2.5microm"
                focusHour={34}
                series={[
                  { id: "49938", values: SERIES_49938, color: "#5470c6", line: "#5c7bda" },
                  { id: "49936", values: SERIES_49937, color: "#91cc75", line: "#9fe081" },
                ]}
              >
                <div
                  role="tooltip"
                  className="absolute -left-2 top-[491px] whitespace-nowrap rounded-lg bg-white px-[22px] py-[22px] font-['Liberation_Sans',Arial,sans-serif] text-[28px] leading-[42px] text-[#666] shadow-[2px_4px_20px_rgba(0,0,0,0.22)]"
                >
                  : Sat Apr 26 2025 21:00:00 GMT+0200 (Central European Summer Time),3.82
                </div>
              </ChartCard>
            </div>
          </main>
          <div className="flex w-[30px] shrink-0 justify-center bg-[#2d2d2d] pb-3 pt-[432px]">
            <div className="w-4 rounded-full bg-[#6b6b6b]" />
          </div>
        </div>
      </div>
    </div>
  );
}
